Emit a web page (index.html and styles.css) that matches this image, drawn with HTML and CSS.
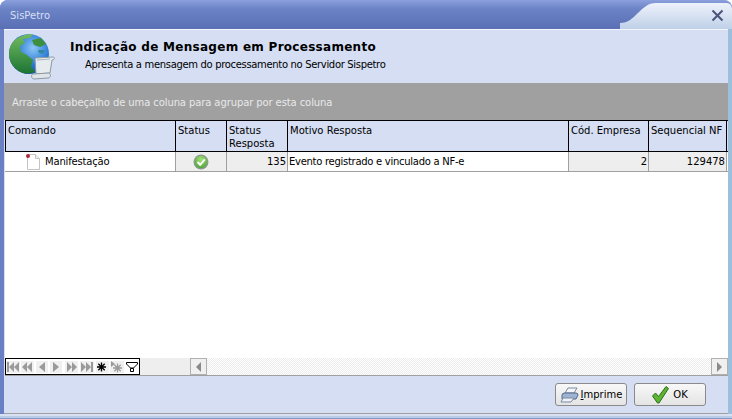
FILE: index.html
```html
<!DOCTYPE html>
<html lang="en">
<head>
    <meta charset="UTF-8">
    <title>SisPetro</title>
    <link rel="stylesheet" href="styles.css">
</head>
<body>
<div class="window">
    <div class="titlebar">
        <span class="title">SisPetro</span>
        <svg class="title-tab" width="112" height="29" viewBox="0 0 112 29">
            <defs>
                <linearGradient id="tabfill" x1="0" y1="0" x2="0" y2="1">
                    <stop offset="0" stop-color="#eef2fb"/>
                    <stop offset="1" stop-color="#bfd0e8"/>
                </linearGradient>
            </defs>
            <path d="M0 23 C16 23 20 3 36 3 L106 3 Q111 3 112 8 L112 29 L0 29 Z" fill="url(#tabfill)"/>
            <path d="M92.500 10.500 L102.500 20.500 M102.500 10.500 L92.500 20.500" stroke="#4a5478" stroke-width="2" fill="none"/>
        </svg>
    </div>
    <div class="content">
        <div class="header">
            <svg class="globe" width="48" height="50" viewBox="0 0 48 50">
                <defs>
                    <radialGradient id="sea" cx="0.6" cy="0.35" r="0.75">
                        <stop offset="0" stop-color="#8cc6f6"/>
                        <stop offset="0.55" stop-color="#2a7ad4"/>
                        <stop offset="1" stop-color="#12488f"/>
                    </radialGradient>
                    <linearGradient id="land" x1="0" y1="0" x2="0" y2="1">
                        <stop offset="0" stop-color="#72bb5e"/>
                        <stop offset="1" stop-color="#1c7434"/>
                    </linearGradient>
                </defs>
                <circle cx="20" cy="21" r="20" fill="url(#sea)"/>
                <path d="M4 9 C8 4 16 1 24 1 L21 5 L14 6 L16 10 L11 13 L12 19 L18 22 L24 27 L22 34 L26 38 C22 41 18 41 14 40 C6 37 0 30 0 21 C0 16 1 13 4 9 Z" fill="url(#land)"/>
                <path d="M23 7 L32 5 L37 11 L31 14 L25 12 Z" fill="#3c8f3e"/>
                <path d="M29 17 L36 17 L34 21 L30 20 Z" fill="#2f8aa0"/>
                <path d="M26 25 L44 24 C46 24 46 27 43 27 L41 40 L27 41 Z" fill="#e6ebee" stroke="#8d9aa3" stroke-width="1"/>
                <path d="M24 41 L40 40 C42 41 42 45 39 45 L25 46 C22 46 22 41 24 41 Z" fill="#dfe5e9" stroke="#8d9aa3" stroke-width="1"/>
                <path d="M28 27 L41 26" stroke="#aab4bb" stroke-width="1"/>
            </svg>
            <div class="header-text">
                <h1>Indicação de Mensagem em Processamento</h1>
                <p>Apresenta a mensagem do processamento no Servidor Sispetro</p>
            </div>
        </div>
        <div class="group-band">Arraste o cabeçalho de uma coluna para agrupar por esta coluna</div>
        <div class="grid">
            <div class="row head">
                <div class="cell c1">Comando</div>
                <div class="cell c2">Status</div>
                <div class="cell c3">Status<br>Resposta</div>
                <div class="cell c4">Motivo Resposta</div>
                <div class="cell c5">Cód. Empresa</div>
                <div class="cell c6">Sequencial NF</div>
            </div>
            <div class="row data">
                <div class="cell c1 command">
                    <svg width="16" height="18" viewBox="0 0 16 18">
                        <path d="M2.500 1.500 H10.500 L14.500 5.500 V16.500 H2.500 Z" fill="#fff" stroke="#c4c4c4"/>
                        <path d="M10.500 1.500 V5.500 H14.500" fill="#eee" stroke="#c4c4c4"/>
                        <circle cx="3" cy="3" r="2" fill="#b02838"/>
                    </svg>
                    <span class="row-text">Manifestação</span>
                </div>
                <div class="cell c2 shaded status">
                    <svg width="16" height="16" viewBox="0 0 16 16">
                        <defs>
                            <radialGradient id="okfill" cx="0.5" cy="0.3" r="0.7">
                                <stop offset="0" stop-color="#a5e07a"/>
                                <stop offset="1" stop-color="#4ea83a"/>
                            </radialGradient>
                        </defs>
                        <circle cx="8" cy="8" r="7.500" fill="#8f9a8f"/>
                        <circle cx="8" cy="8" r="6.200" fill="url(#okfill)"/>
                        <path d="M4.500 8 L7.200 10.800 L11.800 5.400" fill="none" stroke="#fff" stroke-width="2"/>
                    </svg>
                </div>
                <div class="cell c3 shaded num">135</div>
                <div class="cell c4 motivo">Evento registrado e vinculado a NF-e</div>
                <div class="cell c5 shaded num">2</div>
                <div class="cell c6 shaded num">129478</div>
            </div>
            <div class="grid-empty"></div>
            <div class="grid-bottom">
                <div class="navigator">
                    <svg width="133" height="15" viewBox="0 0 133 15">
                        <path d="M0 2h14v12h-14z M15 2h13v12h-13z M30 2h12v12h-12z M44 2h12v12h-12z M59 2h13v12h-13z M74 2h14v12h-14z M90 2h13v12h-13z M104 2h14v12h-14z" fill="#f0f0f0"/>
                        <g fill="#9a9a9a">
                            <path d="M1 3h2v10h-2z M8 3v10l-5-5z M13 3v10l-5-5z"/>
                            <path d="M21 3v10l-5-5z M26 3v10l-5-5z"/>
                            <path d="M39 3v10l-6-5z"/>
                            <path d="M47 3v10l6-5z"/>
                            <path d="M61 3v10l5-5z M66 3v10l5-5z"/>
                            <path d="M75 3v10l5-5z M80 3v10l5-5z M85 3h2v10h-2z"/>
                        </g>
                        <path d="M95.500 3.500v9 M91 8h9 M92.300 4.800l6.400 6.400 M98.700 4.800l-6.400 6.400" stroke="#000" stroke-width="1.300"/>
                        <path d="M111.500 4.500v9 M107 9h9 M108.300 5.800l6.400 6.400 M114.700 5.800l-6.400 6.400" stroke="#9a9a9a" stroke-width="1.300"/>
                        <path d="M105 2v6l4-3z" fill="#9a9a9a"/>
                        <path d="M120.500 3.500h11v1.500l-4 4h-3l-4-4z" fill="#fff" stroke="#000"/>
                        <path d="M124.500 9.500h3v3h-3z" fill="#fff" stroke="#000"/>
                    </svg>
                </div>
                <div class="scrollbar">
                    <div class="scroll-btn"><svg width="7" height="10" viewBox="0 0 7 10"><path d="M6 0v10l-5-5z" fill="#8a8a8a"/></svg></div>
                    <div class="scroll-track"></div>
                    <div class="scroll-btn"><svg width="7" height="10" viewBox="0 0 7 10"><path d="M1 0v10l5-5z" fill="#8a8a8a"/></svg></div>
                </div>
            </div>
        </div>
        <div class="footer">
            <button class="btn print">
                <svg width="19" height="16" viewBox="0 0 19 16">
                    <path d="M5 6 L8 1 H17 L14 6 Z" fill="#f4f6fa" stroke="#7b8aa0"/>
                    <path d="M2 8 Q2 6 5 6 H16 Q18 6 18 8 L16 12 H2 Z" fill="#9fb4d2" stroke="#53678a"/>
                    <path d="M3 11 L1 15 H11 L14 11 Z" fill="#eef1f6" stroke="#7b8aa0"/>
                </svg>
                <span><u>I</u>mprime</span>
            </button>
            <button class="btn">
                <svg width="17" height="18" viewBox="0 0 17 18">
                    <path d="M0.500 10 L3.500 7 L6.500 10.500 L14 0.500 L16.500 2.500 L7 17 L5.500 17 Z" fill="#5cb531" stroke="#2c6d1e"/>
                </svg>
                <span>OK</span>
            </button>
        </div>
    </div>
    <div class="bottom-edge"></div>
</div>
</body>
</html>
```

FILE: styles.css
```css
body {
    margin: 0;
    background: #fff;
    font-family: "DejaVu Sans", sans-serif;
    font-size: 10px;
    color: #000;
}

.window {
    width: 732px;
    height: 419px;
    box-sizing: border-box;
    display: flex;
    flex-direction: column;
    background: linear-gradient(90deg, #6a80c4, #7f9ccf 50%, #9cc0dc);
    border-radius: 8px 8px 0 0;
    overflow: hidden;
}

.titlebar {
    height: 29px;
    flex: none;
    position: relative;
    background: linear-gradient(#8ba0dc, #6c83c6 30%, #5a6fb4);
}

.title {
    display: block;
    padding: 10px 0 0 10px;
    font-size: 10px;
    color: #d5dff4;
}

.title-tab {
    position: absolute;
    top: 0;
    right: 0;
}

.content {
    height: 385px;
    flex: none;
    display: flex;
    flex-direction: column;
    box-sizing: border-box;
    margin: 0 4px 0 4px;
    background: #d5def3;
    border-top: 1px solid #f2f5fc;
    border-bottom: 1px solid #a0a0a0;
}

.bottom-edge {
    flex: 1;
    background: linear-gradient(#d8e0f4 0 2px, #b8cce8 2px 4px, #7d9ac8 4px);
}

.header {
    height: 53px;
    flex: none;
    display: flex;
    padding-left: 5px;
    box-sizing: border-box;
}

.globe {
    margin-top: 3px;
}

.header-text {
    padding: 10px 0 0 13px;
}

h1 {
    margin: 0;
    font-size: 12px;
    font-weight: bold;
    letter-spacing: 0.28px;
}

p {
    margin: 5px 0 0 15px;
    font-size: 10px;
    letter-spacing: -0.33px;
}

.group-band {
    height: 37px;
    flex: none;
    box-sizing: border-box;
    padding: 14px 0 0 8px;
    background: #a0a0a0;
    color: #e8e8e8;
    letter-spacing: -0.1px;
}

.grid {
    flex: 1;
    display: flex;
    flex-direction: column;
    background: #fff;
    min-height: 0;
    margin-left: 1px;
}

.row {
    display: flex;
    flex: none;
}

.cell {
    box-sizing: border-box;
    padding: 2px 2px;
    overflow: hidden;
    white-space: nowrap;
}

.c1 { width: 171px; }
.c2 { width: 51px; }
.c3 { width: 61px; }
.c4 { width: 281px; }
.c5 { width: 80px; }
.c6 { width: 78px; }

.head {
    height: 32px;
    background: #d5def3;
    border-top: 1px solid #000;
    border-bottom: 1px solid #000;
    box-sizing: border-box;
}

.head .cell {
    border-right: 1px solid #000;
    line-height: 13px;
    padding-top: 3px;
}

.head .c1 {
    border-left: 1px solid #000;
}

.data {
    height: 20px;
    border-bottom: 1px solid #a0a0a0;
    box-sizing: border-box;
}

.data .cell {
    border-right: 1px solid #a0a0a0;
    line-height: 15px;
}

.data .num {
    text-align: right;
    padding-right: 1px;
}

.data .motivo {
    padding-left: 1px;
    letter-spacing: -0.28px;
}

.row-text {
    letter-spacing: -0.17px;
}

.shaded {
    background: #eeeeee;
}

.data .command {
    display: flex;
    align-items: center;
    gap: 4px;
    padding: 0 0 0 20px;
}

.data .status {
    display: flex;
    align-items: center;
    justify-content: center;
    padding: 0;
}

.grid-empty {
    flex: 1;
}

.grid-bottom {
    height: 18px;
    flex: none;
    display: flex;
    border-bottom: 1px solid #a0a0a0;
    box-sizing: border-box;
}

.navigator {
    width: 135px;
    flex: none;
    box-sizing: border-box;
    border: 1px solid #000;
    background: #fff;
    line-height: 0;
}

.scrollbar {
    flex: 1;
    display: flex;
    justify-content: space-between;
    padding-left: 50px;
    background: #eeeeee;
}

.scroll-track {
    flex: 1;
    background: repeating-conic-gradient(#fff 0 25%, #ececec 0 50%) 0 0 / 2px 2px;
}

.scroll-btn {
    width: 17px;
    box-sizing: border-box;
    border: 1px solid #b0b0b0;
    background: #f0f0f0;
    display: flex;
    align-items: center;
    justify-content: center;
}

.footer {
    height: 37px;
    flex: none;
    display: flex;
    justify-content: flex-end;
    align-items: center;
    gap: 7px;
    padding-right: 22px;
}

.btn {
    width: 72px;
    height: 23px;
    display: flex;
    align-items: center;
    justify-content: center;
    gap: 4px;
    padding: 0;
    background: linear-gradient(#f8f8f8, #e4e4e4);
    border: 1px solid #8a8a8a;
    border-radius: 3px;
    font-family: inherit;
    font-size: 10px;
}

.print {
    gap: 2px;
}
```
